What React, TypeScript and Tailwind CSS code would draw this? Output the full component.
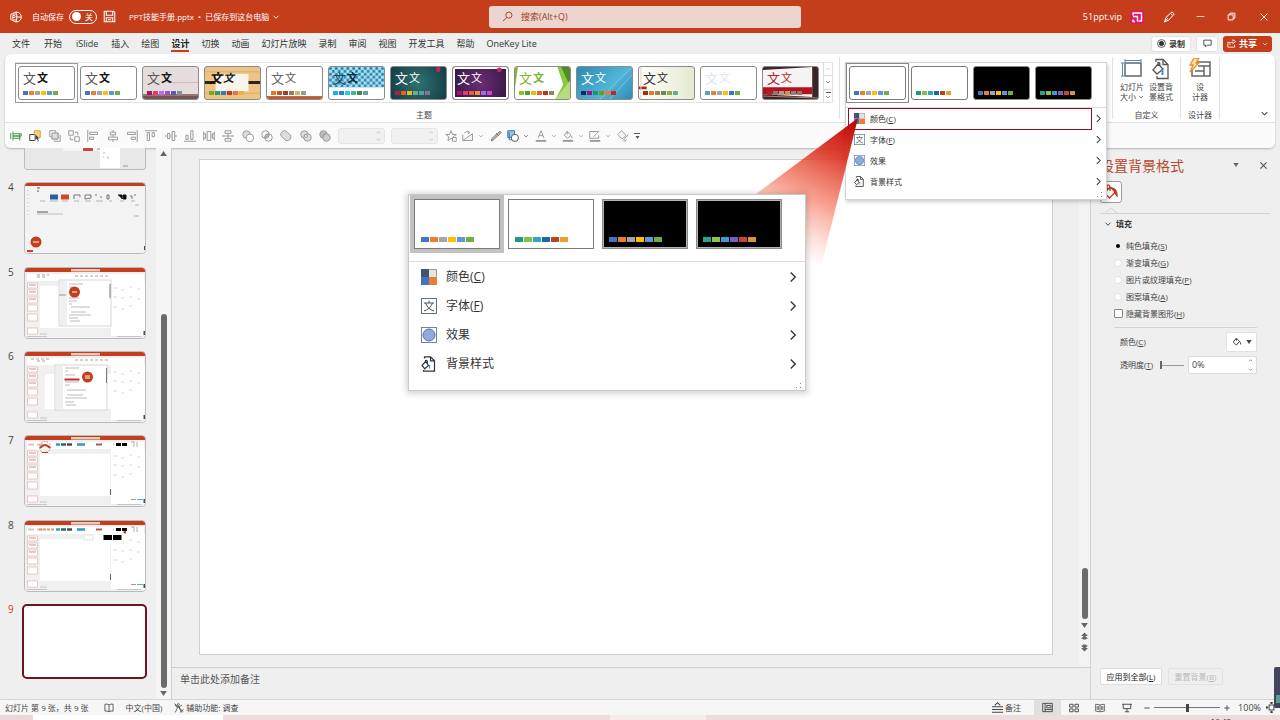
import React from "react";

type Kids = { children?: React.ReactNode; className?: string };

function Icon({ children, className = "size-3", box = "0 0 16 16" }: Kids & { box?: string }) {
  return (
    <svg viewBox={box} className={`shrink-0 ${className}`} fill="none" stroke="currentColor" strokeWidth="1.3" aria-hidden="true">
      {children}
    </svg>
  );
}

function Chevron({ dir = "down", className = "size-2" }: { dir?: "down" | "up" | "right"; className?: string }) {
  const d = { down: "M3 5.5 8 10.5 13 5.5", up: "M3 10.5 8 5.5 13 10.5", right: "M5 2 11 8 5 14" }[dir];
  return (
    <Icon className={className}>
      <path d={d} strokeWidth="1.8" />
    </Icon>
  );
}

function Triangle({ up = false, className = "h-[5px] w-[7px]" }: { up?: boolean; className?: string }) {
  return (
    <svg viewBox="0 0 8 6" className={`shrink-0 ${className}`} fill="currentColor" aria-hidden="true">
      <path d={up ? "M4 0 8 6H0Z" : "M0 0H8L4 6Z"} />
    </svg>
  );
}

/* ---------- title bar ---------- */

function TitleBar() {
  return (
    <header className="flex h-[33px] shrink-0 items-center bg-[#c43e1c] pl-[10px] text-[8px] text-white">
      <div className="flex flex-1 items-center">
        <Icon className="size-3">
          <circle cx="8.5" cy="8" r="6.6" />
          <path d="M8.5 1.4V8H15M8.500 8v6.600" />
          <rect x="1" y="4" width="8" height="8" rx="1" fill="#c43e1c" />
          <path d="M3.700 10.500V6H5.500a1.400 1.400 0 0 1 0 2.900H3.700" />
        </Icon>
        <span className="ml-[10px]">自动保存</span>
        <button aria-label="自动保存 关" className="ml-[5px] flex h-[14px] w-[28px] items-center justify-between rounded-full border border-white px-[2px]">
          <span className="size-[9px] rounded-full bg-white" />
          <span className="pr-[1px] leading-none">关</span>
        </button>
        <button aria-label="保存" className="ml-[6px]">
          <Icon className="size-[13px]">
            <path d="M1.500 1.500H13L14.500 3V14.500H1.500ZM4 1.500V6.500H12V1.500M4 14.500V9.500H12V14.500M6 12H10" />
          </Icon>
        </button>
        <span className="ml-[13px] whitespace-nowrap">PPT技能手册.pptx&nbsp; •&nbsp; 已保存到这台电脑</span>
        <Chevron className="ml-[3px] size-2" />
      </div>
      <label className="flex h-[22px] w-[312px] items-center rounded-[3px] bg-[#edd5cf] pl-[13px] text-[#a33a1e]">
        <Icon className="size-[11px]">
          <circle cx="10" cy="6" r="4.500" />
          <path d="M7 9.500 1.500 14.500" />
        </Icon>
        <input aria-label="搜索" placeholder="搜索(Alt+Q)" className="ml-[8px] min-w-0 flex-1 bg-transparent text-[9px] outline-none placeholder:text-[#a33a1e]" />
      </label>
      <div className="flex flex-1 items-center justify-end">
        <span className="text-[9px]">51ppt.vip</span>
        <svg viewBox="0 0 14 14" className="ml-[8px] size-[14px]" aria-hidden="true">
          <rect width="14" height="14" rx="3" fill="#e3175c" />
          <path d="M3 5.500V3H11.500V11H8.500M3 6.500H7.500V11.500M3 9.500V11.500H5" fill="none" stroke="#fff" strokeWidth="1.400" />
        </svg>
        <button aria-label="画笔" className="ml-[19px]">
          <Icon className="size-3">
            <path d="M2 14.500 4 8.500 10 3 13 6 8 12ZM2 14.500 6.500 9.500M10 3 12 1.200 15 4 13 6" />
          </Icon>
        </button>
        <button aria-label="最小化" className="ml-[21px]">
          <Icon className="size-[9px]"><path d="M1 8H15" /></Icon>
        </button>
        <button aria-label="还原" className="ml-[22px]">
          <Icon className="size-[9px]"><path strokeWidth="1.700" d="M2 5H11V14H2ZM5 5V2H14V11H11" /></Icon>
        </button>
        <button aria-label="关闭" className="mr-[11px] ml-[23px]">
          <Icon className="size-[10px]"><path strokeWidth="1.500" d="M2.500 2.500 13.500 13.500M13.500 2.500 2.500 13.500" /></Icon>
        </button>
      </div>
    </header>
  );
}

/* ---------- tabs ---------- */

const tabs = ["文件", "开始", "iSlide", "插入", "绘图", "设计", "切换", "动画", "幻灯片放映", "录制", "审阅", "视图", "开发工具", "帮助", "OneKey Lite"];

function TabRow() {
  return (
    <nav className="flex h-[21px] shrink-0 items-center pr-2 pl-[5px] text-[9px] text-[#333]">
      {tabs.map((t, i) => (
        <button key={t} className={i < 3 ? "px-[7px]" : "px-[6px]"}>
          <span className={t === "设计" ? "block border-b-2 border-[#c43e1c] pt-[2px] leading-[13px] font-bold text-[#222]" : "block leading-[13px]"}>{t}</span>
        </button>
      ))}
      <div className="ml-auto flex items-center gap-[5px] text-[8px]">
        <button className="flex h-4 w-[40px] items-center justify-center gap-[3px] rounded-[3px] border border-[#e2e2e2] bg-white font-bold">
          <Icon className="size-[9px]">
            <circle cx="8" cy="8" r="7" />
            <circle cx="8" cy="8" r="4" fill="currentColor" />
          </Icon>
          录制
        </button>
        <button aria-label="批注" className="flex h-4 w-[22px] items-center justify-center rounded-[3px] border border-[#e2e2e2] bg-white">
          <Icon className="size-[9px]"><path strokeWidth="1.500" d="M1.500 2H14.500V11H7.500L4.500 14V11H1.500Z" /></Icon>
        </button>
        <button className="flex h-4 w-[49px] items-center justify-center gap-[3px] rounded-[3px] bg-[#c43e1c] text-[9px] font-bold text-white">
          <Icon className="size-[9px]"><path strokeWidth="1.500" d="M6 6H1.500V14.500H13.500V10M5 10.500C5 7 8 5.500 10.500 5.500V8.500L15 4.500 10.500 1V3.500" /></Icon>
          共享
          <Chevron className="ml-[2px] size-[6px]" />
        </button>
      </div>
    </nav>
  );
}

/* ---------- theme gallery ---------- */

type Theme = { name: string; tile: string; first: string; second: string; colors: string[]; art?: React.ReactNode };

const office = ["#4472c4", "#ed7d31", "#a5a5a5", "#ffc000", "#5b9bd5", "#70ad47"];
const alt = ["#1f9a7a", "#7dc24b", "#34a5c9", "#1f66a8", "#b5471b", "#f09c2e"];
const dark = ["#2aa583", "#8cc63f", "#3c9bd0", "#7a5cc0", "#c9452f", "#d8913c"];

const themes: Theme[] = [
  { name: "Office", tile: "bg-white", first: "text-[#555]", second: "text-[#111] font-bold", colors: office },
  { name: "Office 浅色", tile: "bg-white", first: "text-[#555]", second: "text-[#111] font-bold", colors: office },
  {
    name: "画廊", tile: "bg-[#e4dcdd]", first: "text-[#555]", second: "text-[#111] font-bold",
    colors: ["#b31166", "#e33d6f", "#c46ae8", "#9a56c9", "#5d5bb0", "#7f8fa9"],
    art: <><path d="M30 16H57" stroke="#d9b5bd" /><rect y="28" width="57" height="5" fill="#6f5750" /><path d="M0 29H57" stroke="#b09080" /></>,
  },
  {
    name: "木材", tile: "bg-[#edc486]", first: "text-[#111] font-bold italic", second: "text-[#222] font-bold italic",
    colors: ["#7fa52c", "#2f9a6a", "#3878b8", "#c23c2c", "#e07a3c", "#e6b63c"],
    art: <><path d="M0 5H57M0 27H57" stroke="#dcae68" /><path d="M0 16H57" stroke="#2b2420" strokeWidth="3" /><rect x="11" y="7" width="34" height="18" fill="#faf5ea" /></>,
  },
  {
    name: "回顾", tile: "bg-white", first: "text-[#666]", second: "text-[#555]",
    colors: ["#e07b1a", "#bd582c", "#96403a", "#9b7b55", "#d2b66a", "#a09a84"],
    art: <rect y="30" width="57" height="3" fill="#bd5b34" />,
  },
  {
    name: "积分", tile: "bg-white", first: "text-[#14435a]", second: "text-[#0c2c40] font-bold",
    colors: ["#1cade4", "#2683c6", "#27ced7", "#42ba97", "#3e8853", "#62a39f"],
    art: (
      <>
        <defs>
          <pattern id="dots" width="6" height="6" patternUnits="userSpaceOnUse">
            <rect width="6" height="6" fill="#a9dcf0" />
            <path d="M0 0H3V3H0ZM3 3H6V6H3Z" fill="#3f9cc4" />
            <path d="M1 1h1v1H1zM4 4h1v1H4z" fill="#15597c" />
          </pattern>
        </defs>
        <rect width="57" height="21" fill="url(#dots)" />
      </>
    ),
  },
  {
    name: "离子", tile: "bg-[radial-gradient(circle,#2e7370,#143c46)]", first: "text-white", second: "text-white",
    colors: ["#b31e3c", "#ea6312", "#e6b729", "#6aac90", "#5f9c9d", "#8a6f96"],
    art: <path d="M47 0H51V5H47Z" fill="#c8215a" />,
  },
  {
    name: "离子会议室", tile: "bg-[radial-gradient(circle,#6b2d75,#32173f)] ring-2 ring-inset ring-white", first: "text-white", second: "text-white",
    colors: ["#b31166", "#e33d6f", "#e45f3c", "#e9943a", "#9b6bf2", "#d53dd0"],
    art: <circle cx="48" cy="3" r="2.500" fill="#c8215a" />,
  },
  {
    name: "平面", tile: "bg-white", first: "text-[#7ab42c]", second: "text-[#7ab42c] font-bold",
    colors: ["#90c226", "#54a021", "#e6b91e", "#e76618", "#c42f1a", "#918655"],
    art: <><path d="M0 0H3L0 22Z" fill="#7fb731" /><path d="M44 0H57V33H42L50 18Z" fill="#8dc63f" /><path d="M48 0H57V20Z" fill="#4f8b26" /><path d="M57 14 42 33H57Z" fill="#b7dc7d" /></>,
  },
  {
    name: "切片", tile: "bg-[linear-gradient(135deg,#2d89b3,#52b5d6_60%,#2b8db8)]", first: "text-white", second: "text-white",
    colors: ["#052f61", "#a50e82", "#14967c", "#6a9e1f", "#e87d37", "#c62324"],
    art: <path d="M57 0 24 33M57 8 34 33" stroke="#8fd3ea" strokeWidth=".7" />,
  },
  {
    name: "丝状", tile: "bg-[linear-gradient(90deg,#fff,#e5ead0)]", first: "text-[#333]", second: "text-[#222]",
    colors: ["#a53010", "#de7e18", "#9f8351", "#728653", "#92aa4c", "#6aac91"],
    art: <><path d="M0 20H8V23H0Z" fill="#a53010" /><path d="M2 0V33" stroke="#d8d8c0" /></>,
  },
  { name: "柏林", tile: "bg-white", first: "text-[#dbe7f3]", second: "text-[#dbe7f3]", colors: ["#5b9bd5", "#ed7d31", "#a5a5a5", "#ffc000", "#4472c4", "#70ad47"] },
  {
    name: "主要事件", tile: "bg-[#3a2626]", first: "text-[#b31e2c]", second: "text-[#b31e2c]",
    colors: ["#b31e2c", "#8b7b78", "#b49a8c", "#c49a50", "#8b8290", "#8b7b78"],
    art: <><path d="M0 3 51 0V31L0 28Z" fill="#f5f3f3" /><path d="M0 21 51 21V28L0 28Z" fill="#b5101c" /><path d="M0 30 57 32" stroke="#a88" /></>,
  },
];

function Swatches({ colors, large = false }: { colors: string[]; large?: boolean }) {
  return (
    <span className="flex gap-px">
      {colors.map((c, i) => (
        <span key={i} className={large ? "h-[5px] w-2" : "h-1 w-[5px]"} style={{ backgroundColor: c }} />
      ))}
    </span>
  );
}

function ThemeTile({ theme, selected }: { theme: Theme; selected: boolean }) {
  return (
    <div className={selected ? "outline outline-offset-[2px] outline-[#999]" : ""}>
      <button aria-label={theme.name} className={`relative flex h-[34px] w-[57px] shrink-0 flex-col justify-between overflow-hidden rounded-[3px] border border-[#8a8a8a] pt-[2px] pb-1 pl-1 ${theme.tile}`}>
        {theme.art && (
          <svg viewBox="0 0 57 33" preserveAspectRatio="none" className="absolute inset-0 size-full" fill="none" aria-hidden="true">{theme.art}</svg>
        )}
        <span className="relative flex items-center gap-px leading-[18px]">
          <span className={`text-[13px] ${theme.first}`}>文</span>
          <span className={`text-[11px] ${theme.second}`}>文</span>
        </span>
        <span className="relative"><Swatches colors={theme.colors} /></span>
      </button>
    </div>
  );
}

function Separator() {
  return <div className="my-[3px] w-px shrink-0 bg-[#e1e1e1]" />;
}

/* ---------- variants menu ---------- */

const variants = [
  { name: "变体 1", colors: office, dark: false },
  { name: "变体 2", colors: alt, dark: false },
  { name: "变体 3", colors: office, dark: true },
  { name: "变体 4", colors: dark, dark: true },
];

function PaletteIcon({ className }: { className: string }) {
  return (
    <svg viewBox="0 0 16 16" className={className} aria-hidden="true">
      <rect width="8" height="8" fill="#44546a" />
      <rect x="8" width="8" height="8" fill="#e7e6e6" />
      <rect y="8" width="8" height="8" fill="#4472c4" />
      <rect x="8" y="8" width="8" height="8" fill="#ed7d31" />
      <path d="M8.500.5H15.500V7.500" fill="none" stroke="#999" />
    </svg>
  );
}

function FontIcon({ className }: { className: string }) {
  return (
    <svg viewBox="0 0 16 16" className={className} fill="none" aria-hidden="true">
      <rect x=".5" y=".5" width="15" height="15" stroke="#5d7088" />
      <path d="M8 2.500V5M3 5H13M4.500 5C6 9 9 12 13 13M11.500 5C10 9 7 12 3 13" stroke="#555" />
    </svg>
  );
}

function EffectIcon({ className }: { className: string }) {
  return (
    <svg viewBox="0 0 16 16" className={className} aria-hidden="true">
      <rect x=".5" y=".5" width="15" height="15" fill="#fff" stroke="#6f84ad" />
      <circle cx="8" cy="8" r="6" fill="#8faadc" stroke="#4b73bd" />
    </svg>
  );
}

function PageIcon({ className }: { className: string }) {
  return (
    <svg viewBox="0 0 16 16" className={className} fill="none" stroke="#333" strokeWidth="1.200" aria-hidden="true">
      <path d="M3.500 2.500V.8H9.500L13.500 4.800V15.200H2.500V14M9.500.8V4.800H13.500" />
      <path d="M4.500 5.500 1 9.500 3.800 12.800 7.500 9.500 4.500 5.500ZM4.500 7V4.500Q6.500 3.500 6.500 7" />
      <path d="M8.500 9V12.500" stroke="#3d8fd0" />
    </svg>
  );
}

const menuItems = [
  { label: "颜色", key: "C", Glyph: PaletteIcon },
  { label: "字体", key: "F", Glyph: FontIcon },
  { label: "效果", key: "", Glyph: EffectIcon },
  { label: "背景样式", key: "", Glyph: PageIcon },
];

function Key({ k }: { k: string }) {
  return <>({<u className="underline-offset-1">{k}</u>})</>;
}

function Grip() {
  return (
    <svg viewBox="0 0 6 6" className="absolute right-1 bottom-[2px] size-[6px]" fill="#888" aria-hidden="true">
      <path d="M4 0h1v1H4zM4 4h1v1H4zM0 4h1v1H0z" />
    </svg>
  );
}

function VariantsMenu({ large = false }: { large?: boolean }) {
  return (
    <div className={large
      ? "h-[197px] w-[398px] border border-[#c9c9c9] bg-white text-[12px] text-[#333] shadow-[0_1px_6px_2px_rgba(0,0,0,0.16)]"
      : "h-[138px] w-[262px] border border-[#d4d4d4] bg-white text-[8px] text-[#333] shadow-[1px_2px_4px_rgba(0,0,0,0.2)]"}>
      <div className={large ? "flex gap-2 border-b border-[#ddd] px-[5px] pt-1 pb-[12px]" : "flex gap-[5px] border-b border-[#ddd] px-[3px] pt-[3px] pb-[7px]"}>
        {variants.map((v, i) => (
          <div key={v.name} className={i === 0 ? (large ? "outline-4 outline-[#c2c2c2]" : "outline outline-offset-[2px] outline-[#888]") : ""}>
            <button
              aria-label={v.name}
              className={[
                "flex shrink-0 items-end",
                large ? "h-[50px] w-[86px] border pb-[6px] pl-[6px]" : "h-[34px] w-[57px] rounded-[3px] border pb-1 pl-1",
                v.dark ? "border-[#8a8a8a] bg-black" : "border-[#7a7a7a] bg-white",
                v.dark && large ? "ring-1 ring-inset ring-[#b5b5b5]" : "",
              ].join(" ")}
            >
              <Swatches colors={v.colors} large={large} />
            </button>
          </div>
        ))}
      </div>
      {menuItems.map(({ label, key, Glyph }) => (
        <button key={label} className={large ? "flex h-[29px] w-full items-center pt-px pr-[6px] pl-3" : "flex h-[21px] w-full items-center pr-[3px] pl-[8px]"}>
          <Glyph className={large ? "size-4" : "size-[11px]"} />
          <span className={large ? "ml-[9px]" : "ml-[5px]"}>
            {label}
            {key && <Key k={key} />}
          </span>
          <Chevron dir="right" className={large ? "ml-auto size-3" : "ml-auto size-[9px]"} />
        </button>
      ))}
      <Grip />
    </div>
  );
}

function CalloutWedge() {
  return (
    <svg viewBox="0 0 140 150" className="absolute top-[64px] left-[-125px] z-20 h-[150px] w-[140px]" aria-hidden="true">
      <defs>
        <linearGradient id="wedge" gradientUnits="userSpaceOnUse" x1="138" y1="0" x2="70" y2="135">
          <stop offset="0" stopColor="#b80000" />
          <stop offset=".3" stopColor="#dc3220" stopOpacity=".9" />
          <stop offset=".6" stopColor="#f46a50" stopOpacity=".65" />
          <stop offset="1" stopColor="#ff9a88" stopOpacity="0" />
        </linearGradient>
      </defs>
      <path d="M138 0 20 88 70 150 102 145Z" fill="url(#wedge)" />
    </svg>
  );
}

/* ---------- ribbon ---------- */

function ToolButton({ label, children, color = "text-[#999]" }: Kids & { label: string; color?: string }) {
  return (
    <button aria-label={label} className={color}>
      <Icon className="size-3">{children}</Icon>
    </button>
  );
}

function SizeBox({ label }: { label: string }) {
  return (
    <div className="flex h-4 w-[47px] items-center rounded-[3px] border border-[#e6e6e6] bg-[#f1f1f1] text-[#aaa]">
      <input aria-label={label} disabled className="w-0 flex-1 bg-transparent" />
      <span className="flex flex-col gap-[2px] pr-[3px]">
        <Chevron dir="up" className="size-[5px]" />
        <Chevron className="size-[5px]" />
      </span>
    </div>
  );
}

function QuickTools() {
  return (
    <div className="flex h-[26px] items-center rounded-b-md border-t border-[#e1e1e1] bg-[#fbfbfb] pt-px pl-[5px]">
      <div className="flex w-[321px] shrink-0 items-center justify-between">
        <ToolButton label="对齐网格" color="text-[#3c9a50]"><path d="M1 4V12M4 2V14M4 5H15V8H4M4 8H13V11H4M13 5V14" /></ToolButton>
        <ToolButton label="选择" color="text-[#444]"><path d="M7 1H15V10H7Z" fill="#f8d27a" stroke="#d9a428" /><path d="M1 6H8V14H1Z" fill="#fff" /><path d="M8 5V14L10 12 12 15.500 13.500 14.500 12 11.500H14.500Z" fill="#444" stroke="#fff" strokeWidth=".6" /></ToolButton>
        <ToolButton label="上移一层"><path d="M1 1H9V9H1ZM11 4H12V12H4V11" /><path d="M4 4H12V12H4Z" fill="#ddd" /><path d="M14 7H15V15H7V14" /></ToolButton>
        <ToolButton label="组合"><path d="M1 1H7V7H1ZM9 9H15V15H9ZM9 3H13V7M3 9V13H7" /></ToolButton>
        <ToolButton label="左对齐"><path d="M1 0V16M3.500 3H14V6H3.500ZM3.500 9.500H9V12.500H3.500Z" /></ToolButton>
        <ToolButton label="水平居中"><path d="M8 0V3M8 7V9M8 13V16M4.500 3H11.500V6.500H4.500ZM2 9.500H14V13H2Z" /></ToolButton>
        <ToolButton label="右对齐"><path d="M15 0V16M2 3H12.500V6H2ZM7 9.500H12.500V12.500H7Z" /></ToolButton>
        <ToolButton label="顶端对齐"><path d="M0 1H16M3 3.500H6V14H3ZM9.500 3.500H12.500V9H9.500Z" /></ToolButton>
        <ToolButton label="垂直居中"><path d="M0 8H3M7 8H9M13 8H16M3.500 4.500H6.500V11.500H3.500ZM9.500 2H13V14H9.500Z" /></ToolButton>
        <ToolButton label="底端对齐"><path d="M0 15H16M2.500 7H5.500V12.500H2.500ZM9 1H12V12.500H9Z" /></ToolButton>
        <ToolButton label="横向分布"><path d="M1 2V14M15 2V14M5.500 2H10.500V14H5.500ZM1 5H3.500V11H1M15 5H12.500V11H15" /></ToolButton>
        <ToolButton label="纵向分布"><path d="M0 8H16M4 1H12V4.500H4ZM4 11.500H12V15H4ZM8 4.500V11.500" /></ToolButton>
        <ToolButton label="剪除"><circle cx="6" cy="6" r="5" fill="#ddd" /><circle cx="10.500" cy="10.500" r="5" fill="#fff" /></ToolButton>
        <ToolButton label="相交"><circle cx="6" cy="6" r="5" /><circle cx="10" cy="10" r="5" /><path d="M5 10.500Q5 5 10.500 5.500Q11 10.500 5 10.500Z" fill="#bbb" /></ToolButton>
        <ToolButton label="联合"><path d="M6 1A5 5 0 0 0 2 9L8 14A5 5 0 0 0 14 7L9 2A5 5 0 0 0 6 1Z" fill="#ddd" /></ToolButton>
        <ToolButton label="组合形状"><circle cx="6" cy="6" r="5" fill="#ddd" /><circle cx="10" cy="10" r="5" fill="#ddd" /><circle cx="8" cy="8" r="2" fill="#fff" /></ToolButton>
        <ToolButton label="拆分"><circle cx="6" cy="6" r="5" fill="#bbb" /><circle cx="10" cy="10" r="5" fill="#ccc" /><path d="M5 10A5 5 0 0 1 10 5" /></ToolButton>
      </div>
      <div className="ml-[7px] flex shrink-0 items-center gap-[6px]">
        <SizeBox label="高度" />
        <SizeBox label="宽度" />
      </div>
      <div className="ml-[7px] flex w-[195px] shrink-0 items-center justify-between text-[#999]">
        <ToolButton label="更改形状"><path d="M8 1 10 6H15L11 9 12 14 8 11 4 14 5 9 1 6H6Z" /><path d="M10 10H15V15H10Z" fill="#fbfbfb" /></ToolButton>
        <span className="flex items-center gap-1"><ToolButton label="编辑形状"><path d="M1 6V14H14V5L1 14M3 4A5 4 0 0 1 10 3M8 1 10.500 3.500 7.500 5" /></ToolButton><Chevron className="size-[6px]" /></span>
        <ToolButton label="取色器" color="text-[#777]"><path d="M1.500 14.500 3 11 9 5 11 7 5 13ZM8 4 12 8M10 5 13 1.500 15 3.500 11.500 6.500" fill="#bbb" /></ToolButton>
        <span className="flex items-center gap-1 text-[#555]"><ToolButton label="形状" color="text-[#2f74b8]"><path d="M1 1H10V10H1Z" fill="#9cc8ec" /><path d="M3 3V13H8" /><circle cx="10.500" cy="10.500" r="4.800" fill="#fff" stroke="#555" /></ToolButton><Chevron className="size-[6px]" /></span>
        <span className="flex items-center gap-1"><ToolButton label="字体颜色"><path d="M4 11 8 1 12 11M5.500 7.500H10.500" /><path d="M1 14.500H15" strokeWidth="2.500" /></ToolButton><Chevron className="size-[6px]" /></span>
        <span className="flex items-center gap-1"><ToolButton label="填充颜色"><path d="M7 2 12 7 7.500 11 3 7ZM7 2V6M13 8V11" /><path d="M1 14.500H15" strokeWidth="2.500" /></ToolButton><Chevron className="size-[6px]" /></span>
        <span className="flex items-center gap-1"><ToolButton label="轮廓颜色"><path d="M12 2H1V11H13V7M6 9 14 1" /><path d="M1 14.500H15" strokeWidth="2.500" /></ToolButton><Chevron className="size-[6px]" /></span>
        <ToolButton label="格式刷"><path d="M6 1 1 6 7 12 12 7ZM8 14 15 6M9 15 13 13" /></ToolButton>
        <button aria-label="自定义工具栏" className="flex flex-col items-center gap-[2px] text-[#555]">
          <span className="h-px w-[6px] bg-[#555]" />
          <Triangle className="h-[3px] w-[5px]" />
        </button>
      </div>
    </div>
  );
}

function Ribbon() {
  return (
    <section className="mx-[5px] flex h-[94px] shrink-0 flex-col rounded-md bg-white shadow-[0_1px_2px_rgba(0,0,0,0.25)]">
      <div className="flex min-h-0 flex-1 pl-[10px] text-[8px] text-[#444]">
        <div className="flex shrink-0 flex-col items-center">
          <div className="mt-2 flex h-[41px] border border-[#e3e3e3]">
            <div className="flex items-center gap-[5px] pr-[4px] pl-[2px]">
              {themes.map((t, i) => <ThemeTile key={t.name} theme={t} selected={i === 0} />)}
            </div>
            <div className="flex w-[9px] flex-col divide-y divide-[#ddd] border-l border-[#ddd]">
              <button aria-label="上一行" className="flex flex-1 items-center justify-center text-[#bbb]"><Chevron dir="up" className="size-[6px]" /></button>
              <button aria-label="下一行" className="flex flex-1 items-center justify-center"><Chevron className="size-[6px]" /></button>
              <button aria-label="其他" className="flex flex-1 flex-col items-center justify-center gap-px"><span className="h-px w-[5px] bg-[#555]" /><Chevron className="size-[6px]" /></button>
            </div>
          </div>
          <span className="mt-auto pb-px leading-3">主题</span>
        </div>
        <div className="w-[6px] shrink-0" />
        <Separator />
        <div className="relative mr-[5px] ml-[5px] w-[262px] shrink-0">
          <div className="absolute top-2 left-0 z-20">
            <VariantsMenu />
            <div className="absolute top-[46px] left-[3px] h-[22px] w-[244px] border border-[#8f1420]" />
          </div>
          <CalloutWedge />
        </div>
        <Separator />
        <div className="flex w-[67px] shrink-0 flex-col items-center">
          <div className="mt-1 flex gap-[5px] leading-[10px]">
            <button className="flex flex-col items-center">
              <Icon className="size-[22px]" box="0 0 22 22">
                <path d="M4 5H20V18H4Z" stroke="#666" strokeWidth="1.500" />
                <path d="M4 2.500H20M4 1V4M20 1V4M1.500 5V18M0 5H3M0 18H3" stroke="#3d8fd0" strokeWidth="1" />
              </Icon>
              <span className="mt-[2px]">幻灯片</span>
              <span className="flex items-center gap-[2px]">大小<Chevron className="size-[6px]" /></span>
            </button>
            <button className="flex flex-col items-center">
              <Icon className="size-[22px]" box="0 0 22 22">
                <path d="M6 4V1.500H13L18 6.500V20.500H7V18M13 1.500V6.500H18" stroke="#555" />
                <path d="M8 6 3 12 7 16 13 11ZM8 6V4.500Q10 3.500 10 8" stroke="#555" />
                <path d="M12.500 12V17" stroke="#3d8fd0" strokeWidth="2" />
              </Icon>
              <span className="mt-[2px]">设置背</span>
              <span>景格式</span>
            </button>
          </div>
          <span className="mt-auto pb-px leading-3">自定义</span>
        </div>
        <Separator />
        <div className="flex w-[38px] shrink-0 flex-col items-center">
          <button className="mt-1 flex flex-col items-center leading-[10px]">
            <Icon className="size-[22px]" box="0 0 22 22">
              <path d="M7 4H21V18H3V12M9 8H21M15 8V18M6 13H15" stroke="#666" strokeWidth="1.500" />
              <path d="M5 0H10L7 5H10L1 14 4 7H1Z" fill="#fde3b0" stroke="#e8912a" />
            </Icon>
            <span className="mt-[2px]">设</span>
            <span>计器</span>
          </button>
          <span className="mt-auto pb-px leading-3">设计器</span>
        </div>
        <Separator />
        <button aria-label="折叠功能区" className="mt-auto mr-[6px] mb-1 ml-auto"><Chevron className="size-[9px]" /></button>
      </div>
      <QuickTools />
    </section>
  );
}

/* ---------- slide list ---------- */

function MiniWindow({ children }: Kids) {
  return (
    <>
      <rect width="120" height="70" fill="#f0f0f0" />
      <rect width="120" height="4" fill="#c43e1c" />
      <rect x="46" y="1" width="29" height="2.500" fill="#edcabd" />
      <rect x="2" y="6" width="117" height="7" fill="#fff" />
      <rect x="86" y="13" width="34" height="55" fill="#fff" />
      <g stroke="#dfaaa5" strokeWidth=".6" fill="#fff">
        <rect x="2.500" y="15" width="10" height="5" /><rect x="2.500" y="22" width="10" height="5" /><rect x="2.500" y="29" width="10" height="6" />
        <rect x="2.500" y="37" width="10" height="6" /><rect x="2.500" y="46" width="10" height="7" /><rect x="2.500" y="60" width="10" height="6" />
      </g>
      <path d="M4 17H11M4 24H11M4 31H11" stroke="#b77" strokeWidth=".8" />
      <path d="M88 20H92M96 22H99M104 19H107M112 21H115M88 29H92M96 30H99M104 29H107M112 31H115M88 39H92M96 41H99M104 38H107" stroke="#ddd" strokeWidth="1" />
      <path d="M15 66H22M2 68.500H22M92 68.500H116" stroke="#bbb" strokeWidth=".8" />
      <rect x="118.500" y="63" width="1.500" height="4" fill="#446" />
      {children}
    </>
  );
}

function RibbonRow() {
  return (
    <>
      <path d="M3 8.500H9M12 8.500H18M88 8.500H89" stroke="#d8c8c0" strokeWidth="2" />
      <path d="M31 8.500H35M52 8.500H60" stroke="#39b" strokeWidth="2.500" />
      <path d="M36 8.500H41" stroke="#266" strokeWidth="2.500" /><path d="M42 8.500H47" stroke="#545" strokeWidth="2.500" />
      <path d="M71 8.500H77" stroke="#b55" strokeWidth="2" /><path d="M91 8.500H96M97 8.500H102" stroke="#000" strokeWidth="3" />
      <path d="M106 6H109V11M112 6V11" stroke="#999" strokeWidth=".8" />
      <rect x="15" y="18" width="70" height="42" fill="#fff" />
      <path d="M85.500 53V59" stroke="#666" />
      <path d="M106 63.500H111" stroke="#888" strokeWidth=".8" /><path d="M112 63.500H118" stroke="#39c" strokeWidth=".8" />
    </>
  );
}

const docLines = "M44 16H58M44 19H48M44 30H54M44 33H52M44 36H47M46 39H65M46 44H61M44 47H66M44 50H53M45 53H55";

const slides: { n: string; art: React.ReactNode }[] = [
  {
    n: "4",
    art: (
      <>
        <rect width="120" height="70" fill="#f3f3f3" />
        <rect width="120" height="3" fill="#c43e1c" />
        <path d="M3 7V34" stroke="#ccc" strokeDasharray="1 3" strokeWidth="1.500" />
        <path d="M12 5H15M12 8H14M12 29H23" stroke="#555" />
        <path d="M12 31H38" stroke="#aaa" strokeWidth=".7" />
        <rect x="25" y="11.500" width="8" height="5" fill="#2b5ea8" /><rect x="36" y="11.500" width="8" height="5" fill="#d24726" />
        <path d="M49 16V12H55V14M60 16V12H66V15ZM70 12H72M75 14H77M82 12H84V16H82ZM105 13H107V16M109 12H111" stroke="#667" strokeWidth=".9" />
        <path d="M93 12H97V16M98 12H101V16H98Z" fill="#111" stroke="#111" />
        <path d="M15 18H20M25 18H33M37 18H43M49 18H54M60 18H66M71 18H78M84 18H87M95 18H99M106 18H110M110 22H114M109 33H114" stroke="#999" strokeWidth=".7" />
        <circle cx="11" cy="59" r="5.500" fill="#c43e1c" /><path d="M8 59H14" stroke="#fff" />
        <rect x="2" y="67" width="6" height="2" fill="#d33" /><path d="M119.500 63V67" stroke="#446" />
      </>
    ),
  },
  {
    n: "5",
    art: (
      <MiniWindow>
        <rect x="15" y="18" width="70" height="42" fill="#fff" />
        <path d="M12 7H24M12 9H22M50 8H84" stroke="#d6d0cc" strokeWidth="2" strokeDasharray="3 2" />
        <rect x="34" y="12" width="52" height="46" fill="#fff" stroke="#d5d5d5" />
        <rect x="35" y="13" width="7" height="44" fill="#f0f0f0" /><path d="M85 16V30" stroke="#777" />
        <path d={docLines} stroke="#aaa" strokeWidth=".8" />
        <circle cx="49.500" cy="24" r="5.500" fill="#c43e1c" /><path d="M47 24H52" stroke="#fff" /><path d="M34 27H41" stroke="#b88" />
      </MiniWindow>
    ),
  },
  {
    n: "6",
    art: (
      <MiniWindow>
        <rect x="20" y="22" width="66" height="35" fill="#fff" />
        <path d="M6 7H24M12 9H22M50 8H84" stroke="#d6d0cc" strokeWidth="2" strokeDasharray="3 2" />
        <rect x="30" y="13" width="52" height="45" fill="#fff" stroke="#d5d5d5" />
        <rect x="31" y="14" width="7" height="43" fill="#f0f0f0" /><path d="M81.500 16V31" stroke="#777" />
        <path d="M40 16H54M40 19H43M40 23H50M40 30H54M40 33H45M42 38H61M42 43H58M40 46H62M40 50H49M41 53H51" stroke="#aaa" strokeWidth=".8" />
        <rect x="39.500" y="26.500" width="15" height="2" fill="#d12838" />
        <circle cx="62.500" cy="25" r="5.500" fill="#c43e1c" /><path d="M60 24H65M60 26H65" stroke="#fff" />
      </MiniWindow>
    ),
  },
  {
    n: "7",
    art: (
      <MiniWindow>
        <RibbonRow />
        <path d="M15 12Q20 6 25 12" stroke="#c43e1c" strokeWidth="2" /><circle cx="20" cy="11" r="5.500" stroke="#d8705a" strokeDasharray="1.500 1.500" />
        <path d="M17 16.500H23" stroke="#c43e1c" />
      </MiniWindow>
    ),
  },
  {
    n: "8",
    art: (
      <MiniWindow>
        <RibbonRow />
        <path d="M14 8.500H29" stroke="#c9a070" strokeWidth="2" strokeDasharray="3 1" />
        <rect x="58" y="13.500" width="40" height="6" fill="#fff" /><rect x="59" y="14" width="9" height="5" stroke="#ccc" strokeWidth=".6" />
        <rect x="78.500" y="14" width="8.500" height="5" fill="#000" /><rect x="88" y="14" width="8.500" height="5" fill="#000" />
        <path d="M98 11 101 9.500 100.500 13Z" fill="#c00" />
      </MiniWindow>
    ),
  },
];

function SlideList() {
  return (
    <aside className="flex w-[172px] shrink-0 border-r border-[#d0d0d0]">
      <ol className="flex flex-1 flex-col justify-between pb-[20px] pl-2 text-[10px] text-[#444]">
        <li className="flex pl-4">
          <svg viewBox="0 0 120 21" className="h-[22px] w-[122px] rounded-b border-x border-b border-[#bbb]" fill="none" aria-hidden="true">
            <rect width="120" height="21" fill="#e8e8e8" />
            <rect x="38" width="36" height="3" fill="#f5f5f5" /><rect x="75" width="20" height="20" fill="#fff" />
            <rect x="58" y="0" width="10" height="3" fill="#c44" /><path d="M78 5H80M78 9H79M83 8V11" stroke="#bbb" /><path d="M72 1H75M98 18H103" stroke="#999" />
          </svg>
        </li>
        {slides.map((s) => (
          <li key={s.n} className="flex">
            <span className="w-4 leading-[10px]">{s.n}</span>
            <svg viewBox="0 0 120 70" preserveAspectRatio="none" className="h-[72px] w-[122px] rounded border border-[#bbb]" fill="none" aria-hidden="true">{s.art}</svg>
          </li>
        ))}
        <li className="flex text-[#c43e1c]">
          <span className="w-[14px] leading-[10px]">9</span>
          <span className="h-[75px] w-[125px] rounded-[5px] border-2 border-[#6e1420] bg-white" />
        </li>
      </ol>
      <div className="flex w-[15px] flex-col items-center bg-[#f5f5f5] py-[3px] text-[#666]">
        <Triangle up />
        <div className="mt-auto h-[374px] w-[6px] rounded-full bg-[#6b6b6b]" />
        <Triangle className="mt-[3px] h-[5px] w-[7px]" />
      </div>
    </aside>
  );
}

/* ---------- editor ---------- */

function Editor() {
  return (
    <main className="flex min-w-0 flex-1 flex-col">
      <div className="flex min-h-0 flex-1">
        <div className="flex min-w-0 flex-1 pt-[11px] pr-[26px] pb-[12px] pl-[27px]">
          <div className="relative flex-1 border border-[#cfcfcf] bg-white">
            <div className="absolute top-[34px] left-[208px] z-30">
              <VariantsMenu large />
            </div>
          </div>
        </div>
        <div className="flex w-[11px] flex-col items-center justify-end gap-[4px] bg-[#f3f3f3] pb-[15px] text-[#666]">
          <div className="h-[51px] w-[6px] rounded-full bg-[#6b6b6b]" />
          <Triangle />
          <svg viewBox="0 0 8 8" className="h-2 w-[7px]" fill="currentColor" aria-hidden="true"><path d="M4 0 8 4H0ZM4 3 8 7H0ZM2 7H6V8H2Z" /></svg>
          <svg viewBox="0 0 8 8" className="h-2 w-[7px]" fill="currentColor" aria-hidden="true"><path d="M4 8 8 4H0ZM4 5 8 1H0ZM2 0H6V1H2Z" /></svg>
        </div>
      </div>
      <div className="h-8 shrink-0 border-t border-[#ccc] px-2 pt-[3px] text-[10px] leading-4 text-[#555]">单击此处添加备注</div>
    </main>
  );
}

/* ---------- format pane ---------- */

const fills = [
  { label: "纯色填充", key: "S" },
  { label: "渐变填充", key: "G" },
  { label: "图片或纹理填充", key: "P" },
  { label: "图案填充", key: "A" },
];

function FormatPane() {
  return (
    <aside className="flex w-[190px] shrink-0 flex-col border-l border-[#d0d0d0] pt-[6px] pl-[9px] text-[8px] text-[#444]">
      <div className="flex h-[22px] items-center pr-[12px]">
        <h2 className="text-[14px] text-[#b8482c]">设置背景格式</h2>
        <button aria-label="窗格选项" className="ml-auto text-[#666]"><Triangle className="h-[4px] w-[6px]" /></button>
        <button aria-label="关闭窗格" className="ml-[20px] text-[#555]">
          <Icon className="size-[9px]"><path strokeWidth="2" d="M2.500 2.500 13.500 13.500M13.500 2.500 2.500 13.500" /></Icon>
        </button>
      </div>
      <button aria-label="填充" className="mt-[5px] flex size-[22px] shrink-0 items-center justify-center rounded-[3px] border border-[#999] bg-white text-[#c43e1c]">
        <Icon className="size-4">
          <path d="M7 3 1.500 9 6.500 14 12.500 8ZM4 6V2Q6-.5 7 3V7" />
          <path d="M9 4Q14 5 14 12Q11 9 11 6Z" fill="currentColor" />
        </Icon>
      </button>
      <svg viewBox="0 0 22 5" className="mt-[5px] h-[5px] w-[22px] shrink-0" fill="none" aria-hidden="true"><path d="M5 5 11 0 17 5" stroke="#d5d5d5" /></svg>
      <div className="mr-[10px] border-t border-[#d5d5d5]" />
      <h3 className="mt-[3px] flex h-[14px] items-center gap-[4px] pl-1 text-[8px] font-bold text-[#333]"><Chevron className="size-2" />填充</h3>
      <fieldset className="mt-[6px] flex flex-col pl-[14px]">
        {fills.map((f, i) => (
          <label key={f.key} className="flex h-[17px] items-center gap-1">
            <input type="radio" name="fill" defaultChecked={i === 0} className="size-2 appearance-none rounded-full border border-[#e2e2e2] bg-white checked:border-2 checked:border-[#efefef] checked:bg-black" />
            <span>{f.label}<Key k={f.key} /></span>
          </label>
        ))}
        <label className="flex h-[17px] items-center gap-1">
          <input type="checkbox" className="size-[9px] appearance-none rounded-[1px] border border-[#888] bg-white" />
          <span className="-ml-px">隐藏背景图形<Key k="H" /></span>
        </label>
      </fieldset>
      <div className="mt-[5px] mr-[23px] ml-[14px] border-t border-[#d5d5d5]" />
      <div className="mt-1 mr-[23px] ml-5 flex h-5 items-center justify-between">
        <span>颜色<Key k="C" /></span>
        <button aria-label="颜色" className="flex h-5 w-[31px] items-center justify-center gap-[4px] rounded-[2px] border border-[#e2e2e2] bg-white">
          <Icon className="size-[10px]"><path strokeWidth="1.600" d="M7 2 2 8 7 13 12 7ZM7 2V6M12 7Q14 9 14 12" /></Icon>
          <Triangle className="h-[4px] w-[6px]" />
        </button>
      </div>
      <div className="mt-1 mr-[23px] ml-5 flex h-[18px] items-center">
        <label htmlFor="alpha" className="shrink-0">透明度<Key k="T" /></label>
        <input
          id="alpha"
          type="range"
          defaultValue={0}
          className="mr-1 ml-[7px] h-2 w-0 flex-1 appearance-none bg-[linear-gradient(#999,#999)] bg-[length:100%_1px] bg-center bg-no-repeat [&::-webkit-slider-thumb]:h-2 [&::-webkit-slider-thumb]:w-[2px] [&::-webkit-slider-thumb]:appearance-none [&::-webkit-slider-thumb]:bg-[#666]"
        />
        <div className="flex h-[18px] w-[69px] items-center rounded-[2px] border border-[#dcdcdc] bg-white pr-[3px] pl-[3px]">
          <input aria-label="透明度数值" defaultValue="0%" className="w-0 flex-1 text-[9px] outline-none" />
          <span className="flex flex-col gap-1"><Chevron dir="up" className="size-[5px]" /><Chevron className="size-[5px]" /></span>
        </div>
      </div>
      <div className="mt-auto flex gap-[6px] pb-[14px]">
        <button className="h-[17px] w-[62px] rounded-[2px] border border-[#ddd] bg-white text-[8px] text-[#222]">应用到全部<Key k="L" /></button>
        <button disabled className="h-[17px] w-[55px] rounded-[2px] border border-[#e2e2e2] text-[8px] text-[#bbb]">重置背景<Key k="B" /></button>
      </div>
    </aside>
  );
}

/* ---------- status bar ---------- */

function StatusBar() {
  return (
    <footer className="flex h-[16px] shrink-0 items-center border-t border-[#d5d5d5] bg-[#f6f6f6] pl-[5px] text-[8px] whitespace-nowrap text-[#444]">
      <span>幻灯片 第 9 张，共 9 张</span>
      <Icon className="ml-[15px] size-[10px]"><path d="M8 3V14M8 3Q5 1 1.500 2V13Q5 12 8 14Q11 12 14.500 13V2Q11 1 8 3" /></Icon>
      <span className="ml-[12px]">中文(中国)</span>
      <Icon className="ml-[12px] size-[10px]"><circle cx="7" cy="2.500" r="1.500" /><path d="M1 3 5 6V9L2 15M13 3 9 6V9L12 15M5 6H9M1 1 15 14M10 15 15 10" /></Icon>
      <span className="ml-[2px]">辅助功能: 调查</span>
      <button className="ml-auto flex items-center gap-[2px]">
        <Icon className="size-[11px]"><path strokeWidth="1.500" d="M4 5 8 1 12 5M0 7H16M0 11H16M0 15H16" /></Icon>
        备注
      </button>
      <button aria-label="普通视图" className="ml-[13px] flex h-full w-[27px] items-center justify-center bg-[#e0e0e0]">
        <Icon className="size-[11px]"><path d="M1 2H15V14H1ZM4.500 2V14M4.500 11H15M7 5H13V8.500H7Z" /></Icon>
      </button>
      <button aria-label="幻灯片浏览" className="ml-[8px]"><Icon className="size-[10px]"><path strokeWidth="1.500" d="M1 2H6.500V6.500H1ZM9.500 2H15V6.500H9.500ZM1 9.500H6.500V14H1ZM9.500 9.500H15V14H9.500Z" /></Icon></button>
      <button aria-label="阅读视图" className="ml-[16px]"><Icon className="size-[10px]"><path strokeWidth="1.200" d="M8 3V14M8 3 1 2V13L8 14 15 13V2ZM3.500 5V11M5.500 5V11M10.500 5V11M12.500 5V11" /></Icon></button>
      <button aria-label="幻灯片放映" className="ml-[17px]"><Icon className="size-[10px]"><path strokeWidth="1.500" d="M0 2H16M2 2V9H14V2M8 9V14M4.500 14H11.500" /></Icon></button>
      <button aria-label="缩小" className="ml-[12px]"><Icon className="size-[6px]"><path strokeWidth="2.500" d="M1 8H15" /></Icon></button>
      <input
        aria-label="缩放"
        type="range"
        defaultValue={50}
        className="mx-[4px] h-2 w-[66px] appearance-none bg-[linear-gradient(#777,#777)] bg-[length:100%_1px] bg-center bg-no-repeat [&::-webkit-slider-thumb]:h-2 [&::-webkit-slider-thumb]:w-[3px] [&::-webkit-slider-thumb]:appearance-none [&::-webkit-slider-thumb]:bg-[#444]"
      />
      <button aria-label="放大"><Icon className="size-[6px]"><path strokeWidth="2.500" d="M1 8H15M8 1V15" /></Icon></button>
      <span className="ml-[8px] text-[9px]">100%</span>
      <Icon className="mr-[3px] ml-[5px] size-[11px]"><path strokeWidth="1.500" d="M4.500 4.500H11.500V11.500H4.500ZM8 0V3M8 13V16M0 8H3M13 8H16M6 2 8 0 10 2M6 14 8 16 10 14M2 6 0 8 2 10" /></Icon>
    </footer>
  );
}

function Taskbar() {
  return (
    <div className="flex h-[5px] shrink-0 overflow-hidden bg-[#ecdcdd] text-[8px] leading-[10px] text-[#222]">
      <div className="w-[33px] bg-[#ecd8d8]" />
      <div className="w-[190px] bg-white" />
      <div className="w-[387px] bg-[#f0dcdc]" />
      <div className="w-[96px] bg-[#f6ecec]" />
      <span className="mt-px mr-[49px] ml-auto">16:48</span>
    </div>
  );
}

export default function App() {
  return (
    <div className="relative flex h-screen flex-col overflow-hidden bg-[#efefef] font-['Open_Sans','Noto_Sans_CJK_SC',sans-serif]">
      <TitleBar />
      <TabRow />
      <Ribbon />
      <div className="flex min-h-0 flex-1">
        <SlideList />
        <Editor />
        <FormatPane />
      </div>
      <StatusBar />
      <Taskbar />
      <div className="absolute right-0 bottom-[12px] h-[41px] w-[6px] rounded-l-[2px] bg-[#41445a] pt-[28px]">
        <div className="ml-[2px] h-[8px] w-[4px] bg-[#58a08c]" />
      </div>
    </div>
  );
}
